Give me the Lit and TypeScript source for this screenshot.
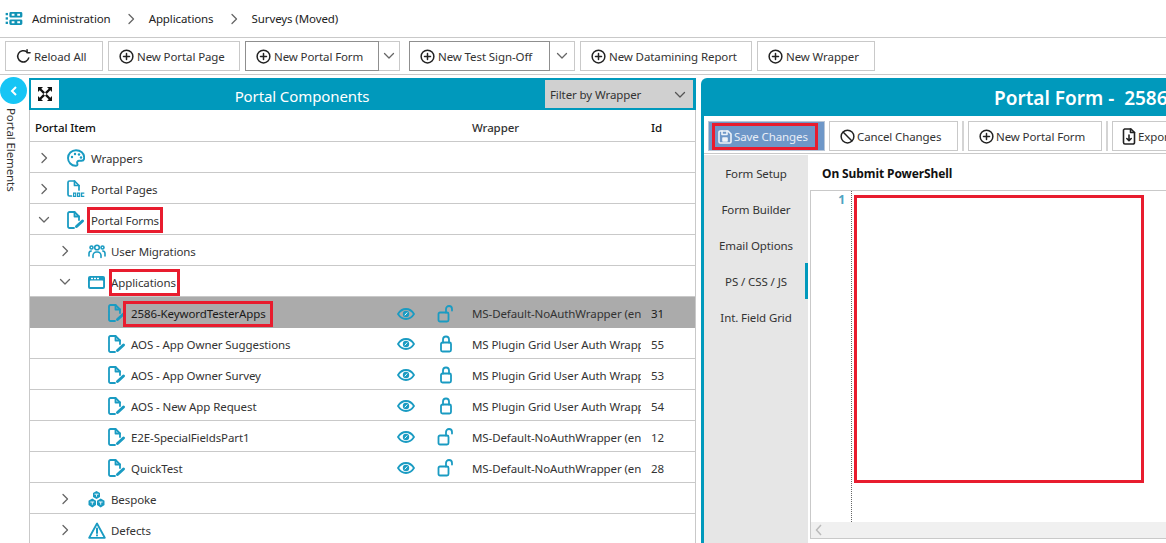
import { LitElement, html, css, svg } from "lit";
import { customElement } from "lit/decorators.js";

const ic = (w: number, h: number, vb: string, body: any) =>
  html`<svg width=${w} height=${h} viewBox=${vb} fill="none" stroke="currentColor" stroke-width="1.6" stroke-linecap="round" stroke-linejoin="round">${body}</svg>`;

const plus = ic(15, 15, "0 0 16 16", svg`<circle cx="8" cy="8" r="6.800"/><path d="M8 4.800v6.400M4.800 8h6.400"/>`);
const reload = ic(15, 15, "0 0 16 16", svg`<path d="M13.600 9.500A6 6 0 1 1 11.600 3.200"/><path d="M11.800 0.800v3.200H15" />`);
const chevR = ic(10, 12, "0 0 10 12", svg`<path d="M3 1.500 7.500 6 3 10.500" stroke-width="1.300"/>`);
const chevD = ic(12, 10, "0 0 12 10", svg`<path d="M1.500 2.500 6 7l4.500-4.500" stroke-width="1.300"/>`);
const formI = ic(19, 19, "0 0 19 19", svg`<g stroke-width="1.800"><path d="M8 17H3.500A1.500 1.500 0 0 1 2 15.500V2.500A1.500 1.500 0 0 1 3.500 1H8.500L13 5.500V9" /><path d="M8.500 1V5.500H13"/></g><path d="M10.500 15.500l6-5.500" stroke-width="3"/>`);
const docI = html`<svg width="19" height="19" viewBox="0 0 19 19" fill="none" stroke="currentColor" stroke-width="1.700" stroke-linecap="round" stroke-linejoin="round"><path d="M5.500 16H3.500A1.500 1.500 0 0 1 2 14.500V2.500A1.500 1.500 0 0 1 3.500 1H8.500L13 5.500V10"/><path d="M8.500 1V5.500H13"/><g fill="currentColor" stroke="none"><path fill-rule="evenodd" d="M7 12.500h3.300v4.500H7zM8.200 13.700v2.100h.9v-2.100z"/><path fill-rule="evenodd" d="M11 12.500h3.300v4.500H11zM12.200 13.700v2.100h.9v-2.100z"/><path d="M15 12.500h3.300v1.300h-2.100v2h2.100V17H15z"/></g></svg>`;
const palette = ic(18, 18, "0 0 18 18", svg`<g stroke-width="1.900"><path d="M9 1.200C4.500 1.200 1 4.700 1 9s3.500 7.800 7.500 7.800c1.800 0 2.300-1.100 1.800-2.300-.6-1.500.3-2.700 1.900-2.700h2.300c1.800 0 2.700-1.200 2.700-3C17.200 4.300 13.500 1.200 9 1.200z"/></g><g fill="currentColor" stroke="none"><circle cx="5" cy="8" r="1.200"/><circle cx="8" cy="5" r="1.200"/><circle cx="12" cy="5.500" r="1.200"/><circle cx="14" cy="8.500" r="1.200"/></g>`);
const users = ic(18, 16, "0 0 18 16", svg`<circle cx="9" cy="4.500" r="2.300"/><circle cx="3.500" cy="4.500" r="1.500"/><circle cx="14.500" cy="4.500" r="1.500"/><path d="M5 14.500v-2A3.500 3.500 0 0 1 8.500 9h1a3.500 3.500 0 0 1 3.500 3.500v2"/><path d="M1 13v-2.500A2.500 2.500 0 0 1 3.200 8M17 13v-2.500A2.500 2.500 0 0 0 14.800 8"/>`);
const app = html`<svg width="17" height="13" viewBox="0 0 17 13"><rect x="0" y="0" width="17" height="13" rx="2" fill="currentColor"/><rect x="1.900" y="4.500" width="13.200" height="6.600" rx=".6" fill="#fff"/><rect x="3" y="1.800" width="2" height="1.400" fill="#fff"/><rect x="6" y="1.800" width="2" height="1.400" fill="#fff"/><rect x="9" y="1.800" width="2" height="1.400" fill="#fff"/></svg>`;
const cubes = html`<svg width="17" height="17" viewBox="0 0 17 17" fill="currentColor"><path d="M8.500 0 12 2v4L8.500 8 5 6V2z"/><path d="M4.300 7.500 8 9.700v4.200L4.300 16.500.5 14V9.700z"/><path d="M12.700 7.500 16.500 9.700V14l-3.800 2.500L9 13.900V9.700z"/><path d="M6.500 3.200h4M2.400 11h3.800M10.800 11h3.800M8.500 3.500V5.700M4.300 11v2.700M12.700 11v2.700" stroke="#fff" stroke-width=".9"/></svg>`;
const warn = ic(18, 17, "0 0 18 17", svg`<g stroke-width="1.800"><path d="M9 1.500 1.200 15.800h15.600z"/></g><path d="M9 6.500v4.500M9 13.200v.4" stroke-width="2"/>`);
const eye = ic(18, 12, "0 0 18 12", svg`<g stroke-width="1.800"><path d="M1 6C3 2.800 5.800 1 9 1s6 1.800 8 5c-2 3.200-4.800 5-8 5S3 9.200 1 6z"/></g><circle cx="9" cy="6" r="3.200" fill="currentColor" stroke="none"/><path d="M8 7l2-2.200" stroke="#fff" stroke-width="1"/>`);
const lockO = ic(18, 18, "0 0 18 18", svg`<g stroke-width="1.800"><rect x="1.500" y="7.500" width="10" height="9" rx="1.500"/><path d="M9 7.500V4a3 3 0 0 1 6 0v1.500"/></g>`);
const lockC = ic(14, 18, "0 0 14 18", svg`<g stroke-width="1.800"><rect x="2" y="7.500" width="10" height="9" rx="1.500"/><path d="M4 7.500V4.500a3 3 0 0 1 6 0v3"/></g>`);
const expand = html`<svg width="16" height="16" viewBox="0 0 16 16" fill="#111"><path d="M1 1h5L4.300 2.700 8 6.300 6.300 8 2.700 4.300 1 6zM15 1v5l-1.700-1.700L9.700 8 8 6.300l3.700-3.600L10 1zM1 15v-5l1.700 1.700L6.300 8 8 9.700l-3.700 3.600L6 15zM15 15h-5l1.700-1.700L8 9.700 9.700 8l3.600 3.700L15 10z"/></svg>`;
const save = ic(14, 14, "0 0 14 14", svg`<path d="M1 2.200A1.200 1.200 0 0 1 2.200 1H10l3 3v7.800A1.200 1.200 0 0 1 11.800 13H2.200A1.200 1.200 0 0 1 1 11.800z"/><path d="M4 1v3.500h5V1"/><rect x="5" y="8" width="4" height="3" fill="currentColor"/>`);
const ban = ic(15, 15, "0 0 16 16", svg`<circle cx="8" cy="8" r="6.800"/><path d="M3.500 3.500l9 9"/>`);
const exportI = ic(14, 17, "0 0 14 17", svg`<path d="M2.500 1H9l3.500 3.500V14.500A1.500 1.500 0 0 1 11 16H3a1.500 1.500 0 0 1-1.500-1.500V2z"/><path d="M8.500 1v3.500h4"/><path d="M7 7v5.500M4.800 10.500 7 12.700l2.200-2.200"/>`);
const logo = html`<svg width="18" height="13" viewBox="0 0 18 14" fill="#1193b5"><rect x="0" y="1" width="2.500" height="2.500"/><rect x="0" y="5.700" width="2.500" height="2.500"/><rect x="0" y="10.400" width="2.500" height="2.500"/><path fill-rule="evenodd" d="M5.500 0h11a1.500 1.500 0 0 1 1.500 1.500v3a1.500 1.500 0 0 1-1.500 1.500h-11A1.500 1.500 0 0 1 4 4.500v-3A1.500 1.500 0 0 1 5.500 0zM6.500 2v2h3V2zM12.500 2v2h3V2z"/><path fill-rule="evenodd" d="M5.500 8h11a1.500 1.500 0 0 1 1.500 1.500v3a1.500 1.500 0 0 1-1.500 1.500h-11A1.500 1.500 0 0 1 4 12.500v-3A1.500 1.500 0 0 1 5.500 8zM6.500 10v2h3v-2zM12.500 10v2h3v-2z"/></svg>`;

interface Row { lv: number; chev?: "r" | "d"; icon: any; label: string; mark?: string; sel?: boolean; lock?: "o" | "c"; wrap?: string; id?: string; }
const NA = "MS-Default-NoAuthWrapper (en";
const PG = "MS Plugin Grid User Auth Wrapp";
const rows: Row[] = [
  { lv: 0, chev: "r", icon: palette, label: "Wrappers" },
  { lv: 0, chev: "r", icon: docI, label: "Portal Pages" },
  { lv: 0, chev: "d", icon: formI, label: "Portal Forms", mark: "mk mk-f" },
  { lv: 1, chev: "r", icon: users, label: "User Migrations" },
  { lv: 1, chev: "d", icon: app, label: "Applications", mark: "mk mk-a" },
  { lv: 2, icon: formI, label: "2586-KeywordTesterApps", mark: "mk mk-s", sel: true, lock: "o", wrap: NA, id: "31" },
  { lv: 2, icon: formI, label: "AOS - App Owner Suggestions", lock: "c", wrap: PG, id: "55" },
  { lv: 2, icon: formI, label: "AOS - App Owner Survey", lock: "c", wrap: PG, id: "53" },
  { lv: 2, icon: formI, label: "AOS - New App Request", lock: "c", wrap: PG, id: "54" },
  { lv: 2, icon: formI, label: "E2E-SpecialFieldsPart1", lock: "o", wrap: NA, id: "12" },
  { lv: 2, icon: formI, label: "QuickTest", lock: "o", wrap: NA, id: "28" },
  { lv: 1, chev: "r", icon: cubes, label: "Bespoke" },
  { lv: 1, chev: "r", icon: warn, label: "Defects" },
];

@customElement("app-root")
export class AppRoot extends LitElement {
  static styles = css`
    :host { display: block; width: 1166px; height: 543px; overflow: hidden; background: #fff; color: #222;
      font-family: "Noto Sans", "Open Sans", sans-serif; font-size: 11.5px; letter-spacing: -0.1px; }
    svg { display: block; flex: none; }
    .crumbs { height: 37px; display: flex; align-items: center; padding: 1px 0 0 5px; box-sizing: content-box; margin-top: -1px; border-bottom: 1px solid #c9c9c9; }
    .crumbs .logo { margin-right: 9px; }
    .crumbs .sep { color: #666; margin: 0 13px 0 15px; }
    .toolbar { height: 37px; box-sizing: border-box; display: flex; align-items: center; gap: 5px; padding: 0 0 0 5px; border-bottom: 1px solid #c9c9c9; }
    .btn { height: 30px; box-sizing: border-box; border: 1px solid #c9c9c9; background: #fff; display: flex; align-items: center; gap: 3px; color: #333; white-space: nowrap; flex: none; padding-top: 1px; }
    .btn svg { color: #222; }
    .b1 { width: 98px; padding-left: 10px; }
    .b2 { width: 132px; padding-left: 10px; }
    .split { display: flex; height: 30px; border: 1px solid #c9c9c9; box-sizing: border-box; flex: none; }
    .split .main { border: 1px solid #8f8f8f; margin: -1px 0 -1px -1px; height: 30px; box-sizing: border-box; display: flex; align-items: center; gap: 3px; padding: 1px 0 0 10px; color: #333; white-space: nowrap; }
    .split .main svg { color: #222; }
    .split .dd { width: 20px; display: flex; align-items: center; justify-content: center; color: #666; }
    .s1 .main { width: 134px; } .s2 .main { width: 141px; } .s2 .dd { width: 24px; } .s2 { margin-left: 4px; }
    .b3 { width: 172px; padding-left: 10px; }
    .b4 { width: 118px; padding-left: 10px; }
    .main-area { display: flex; height: 468px; }
    .rail { width: 29px; flex: none; }
    .circle { width: 27px; height: 27px; border-radius: 50%; background: #16c5f5; color: #fff; display: flex; align-items: center; justify-content: center; margin-top: 2px; }
    .rail-text { writing-mode: vertical-rl; margin: 4px 0 0 3px; line-height: 16px; color: #333; }
    .left { width: 667px; flex: none; margin-top: 3px; border-left: 1px solid #c9c9c9; border-right: 1px solid #c9c9c9; box-sizing: border-box; margin-right: 5px; }
    .lhead { height: 32px; margin: 0 -1px; background: #0099bc; display: flex; align-items: center; padding: 0 3px 0 2px; color: #fff; }
    .xbtn { width: 28px; height: 28px; background: #fff; display: flex; align-items: center; justify-content: center; flex: none; }
    .ltitle { flex: 1; text-align: center; font-size: 15px; padding-top: 3px; }
    .filter { width: 148px; height: 28px; background: #d0d0d0; color: #333; display: flex; align-items: center; justify-content: space-between; padding: 1px 7px 0 5px; box-sizing: border-box; }
    .filter svg { color: #555; }
    .row { height: 31px; box-sizing: border-box; border-bottom: 1px solid #c9c9c9; display: grid; grid-template-columns: 354px 44px 36px 177px 1fr; align-items: center; color: #333; padding-top: 2px; }
    .row.th { height: 32px; color: #111; font-weight: 500; padding-top: 4px; }
    .row.sel { background: #ababab; color: #1a1a1a; border-bottom: none; }
    .th > div:first-child { padding-left: 5px; }
    .name { display: flex; align-items: center; min-width: 0; white-space: nowrap; }
    .lv0 { padding-left: 9px; } .lv1 { padding-left: 30px; } .lv2 { padding-left: 77px; }
    .chev { width: 10px; color: #666; margin-right: 17px; display: flex; justify-content: center; }
    .ico { width: 19px; color: #1a9bc2; display: flex; justify-content: center; margin-right: 5px; }
    .lv0 .ico { margin-right: 6px; }
    .lbl { position: relative; }
    .mk::after { content: ""; position: absolute; box-sizing: border-box; border: 3px solid #e81c2e; pointer-events: none; }
    .mk-f::after { left: -4px; right: -4px; top: -6px; bottom: -5px; }
    .mk-a::after { left: -2px; right: -4px; top: -6px; bottom: -6px; }
    .mk-s::after { left: -8px; right: -7px; top: -5px; bottom: -6px; }
    .c { display: flex; justify-content: center; color: #1a9bc2; }
    .wrap { overflow: hidden; white-space: nowrap; color: #333; padding-left: 8px; }
    .id { padding-left: 10px; }
    .right { flex: 1; min-width: 0; margin-top: 3px; border-top-left-radius: 6px; overflow: hidden; }
    .rhead { height: 38px; background: #0099bc; color: #fff; font-weight: 600; font-size: 19px; letter-spacing: 0; display: flex; align-items: center; padding: 1px 0 0 293px; box-sizing: border-box; white-space: pre; overflow: hidden; }
    .rbody { border-left: 3px solid #0099bc; height: 430px; box-sizing: border-box; }
    .rbar { height: 38px; box-sizing: border-box; display: flex; align-items: flex-start; gap: 4px; padding: 5px 0 0 4px; border-bottom: 1px solid #c9c9c9; }
    .rbar .btn { gap: 2px; padding-left: 10px; }
    .rbar .exp { padding-left: 9px; }
    .savewrap { width: 117px; height: 30px; background: #6e97c8; border: 1px solid #b9c6d6; box-sizing: border-box; color: #e9eef6; display: flex; align-items: center; gap: 2px; padding: 1px 0 0 9px; position: relative; flex: none; white-space: nowrap; }
    .savewrap svg { color: #eef3f9; }
    .savewrap::after { content: ""; position: absolute; inset: 1px 6px 0 3px; border: 3px solid #e81c2e; }
    .vsep { width: 2px; height: 30px; background: #d4d4d4; flex: none; }
    .cancel { width: 129px; } .newf { width: 134px; } .exp { width: 100px; }
    .split2 { display: flex; height: 392px; }
    .nav { width: 104px; background: #e6e6e6; flex: none; display: flex; flex-direction: column; margin-top: 1px; }
    .nav div { height: 36px; display: flex; align-items: center; justify-content: center; box-sizing: border-box; color: #333; }
    .nav .on { border-right: 3px solid #0099bc; padding-left: 3px; }
    .edit { flex: 1; padding: 0 0 0 2px; min-width: 0; display: flex; flex-direction: column; }
    .etitle { height: 36px; box-sizing: border-box; display: flex; align-items: center; padding: 3px 0 0 12px; font-weight: 700; font-size: 12px; color: #111; flex: none; }
    .code { height: 349px; box-sizing: border-box; border: 1px solid #c9c9c9; border-right: none; position: relative; display: flex; }
    .gutter { width: 41px; box-sizing: border-box; border-right: 1px dotted #666; height: 331px; text-align: right; padding: 2px 6px 0 0; color: #4da3bf; font-weight: 700; font-size: 12px; line-height: 14px; flex: none; }
    .hl { position: absolute; left: 43px; top: 4px; width: 284px; height: 282px; border: 3px solid #e81c2e; }
    .hscroll { position: absolute; left: 0; right: 0; bottom: 0; height: 16px; background: #f0f0f0; color: #bbb; display: flex; align-items: center; padding-left: 4px; }
  `;

  private row(r: Row) {
    return html`<div class="row ${r.sel ? "sel" : ""}">
      <div class="name lv${r.lv}">
        ${r.chev ? html`<span class="chev">${r.chev === "r" ? chevR : chevD}</span>` : ""}
        <span class="ico">${r.icon}</span>
        <span class="lbl ${r.mark ?? ""}">${r.label}</span>
      </div>
      ${r.lock ? html`<div class="c">${eye}</div><div class="c">${r.lock === "o" ? lockO : lockC}</div><div class="wrap">${r.wrap}</div><div class="id">${r.id}</div>` : ""}
    </div>`;
  }

  render() {
    return html`
      <div class="crumbs"><span class="logo">${logo}</span><span>Administration</span><span class="sep">${chevR}</span><span>Applications</span><span class="sep">${chevR}</span><span>Surveys (Moved)</span></div>
      <div class="toolbar">
        <div class="btn b1">${reload}Reload All</div>
        <div class="btn b2">${plus}New Portal Page</div>
        <div class="split s1"><div class="main">${plus}New Portal Form</div><div class="dd">${chevD}</div></div>
        <div class="split s2"><div class="main">${plus}New Test Sign-Off</div><div class="dd">${chevD}</div></div>
        <div class="btn b3">${plus}New Datamining Report</div>
        <div class="btn b4">${plus}New Wrapper</div>
      </div>
      <div class="main-area">
        <div class="rail">
          <div class="circle"><svg width="10" height="12" viewBox="0 0 10 12" fill="none" stroke="#fff" stroke-width="2"><path d="M7 2 3 6l4 4"/></svg></div>
          <div class="rail-text">Portal Elements</div>
        </div>
        <div class="left">
          <div class="lhead"><div class="xbtn">${expand}</div><div class="ltitle">Portal Components</div><div class="filter">Filter by Wrapper ${chevD}</div></div>
          <div class="row th"><div>Portal Item</div><div></div><div></div><div class="wrap">Wrapper</div><div class="id">Id</div></div>
          ${rows.map((r) => this.row(r))}
        </div>
        <div class="right">
          <div class="rhead">Portal Form -  2586</div>
          <div class="rbody">
            <div class="rbar">
              <div class="savewrap">${save}Save Changes</div>
              <div class="btn cancel">${ban}Cancel Changes</div>
              <div class="vsep"></div>
              <div class="btn newf">${plus}New Portal Form</div>
              <div class="vsep"></div>
              <div class="btn exp">${exportI}Export</div>
            </div>
            <div class="split2">
              <div class="nav"><div>Form Setup</div><div>Form Builder</div><div>Email Options</div><div class="on">PS / CSS / JS</div><div>Int. Field Grid</div></div>
              <div class="edit">
                <div class="etitle">On Submit PowerShell</div>
                <div class="code"><div class="gutter">1</div><div class="hl"></div><div class="hscroll"><svg width="8" height="12" viewBox="0 0 8 12" fill="none" stroke="currentColor" stroke-width="1.500"><path d="M6 1 1.500 6 6 11"/></svg></div></div>
              </div>
            </div>
          </div>
        </div>
      </div>`;
  }
}
